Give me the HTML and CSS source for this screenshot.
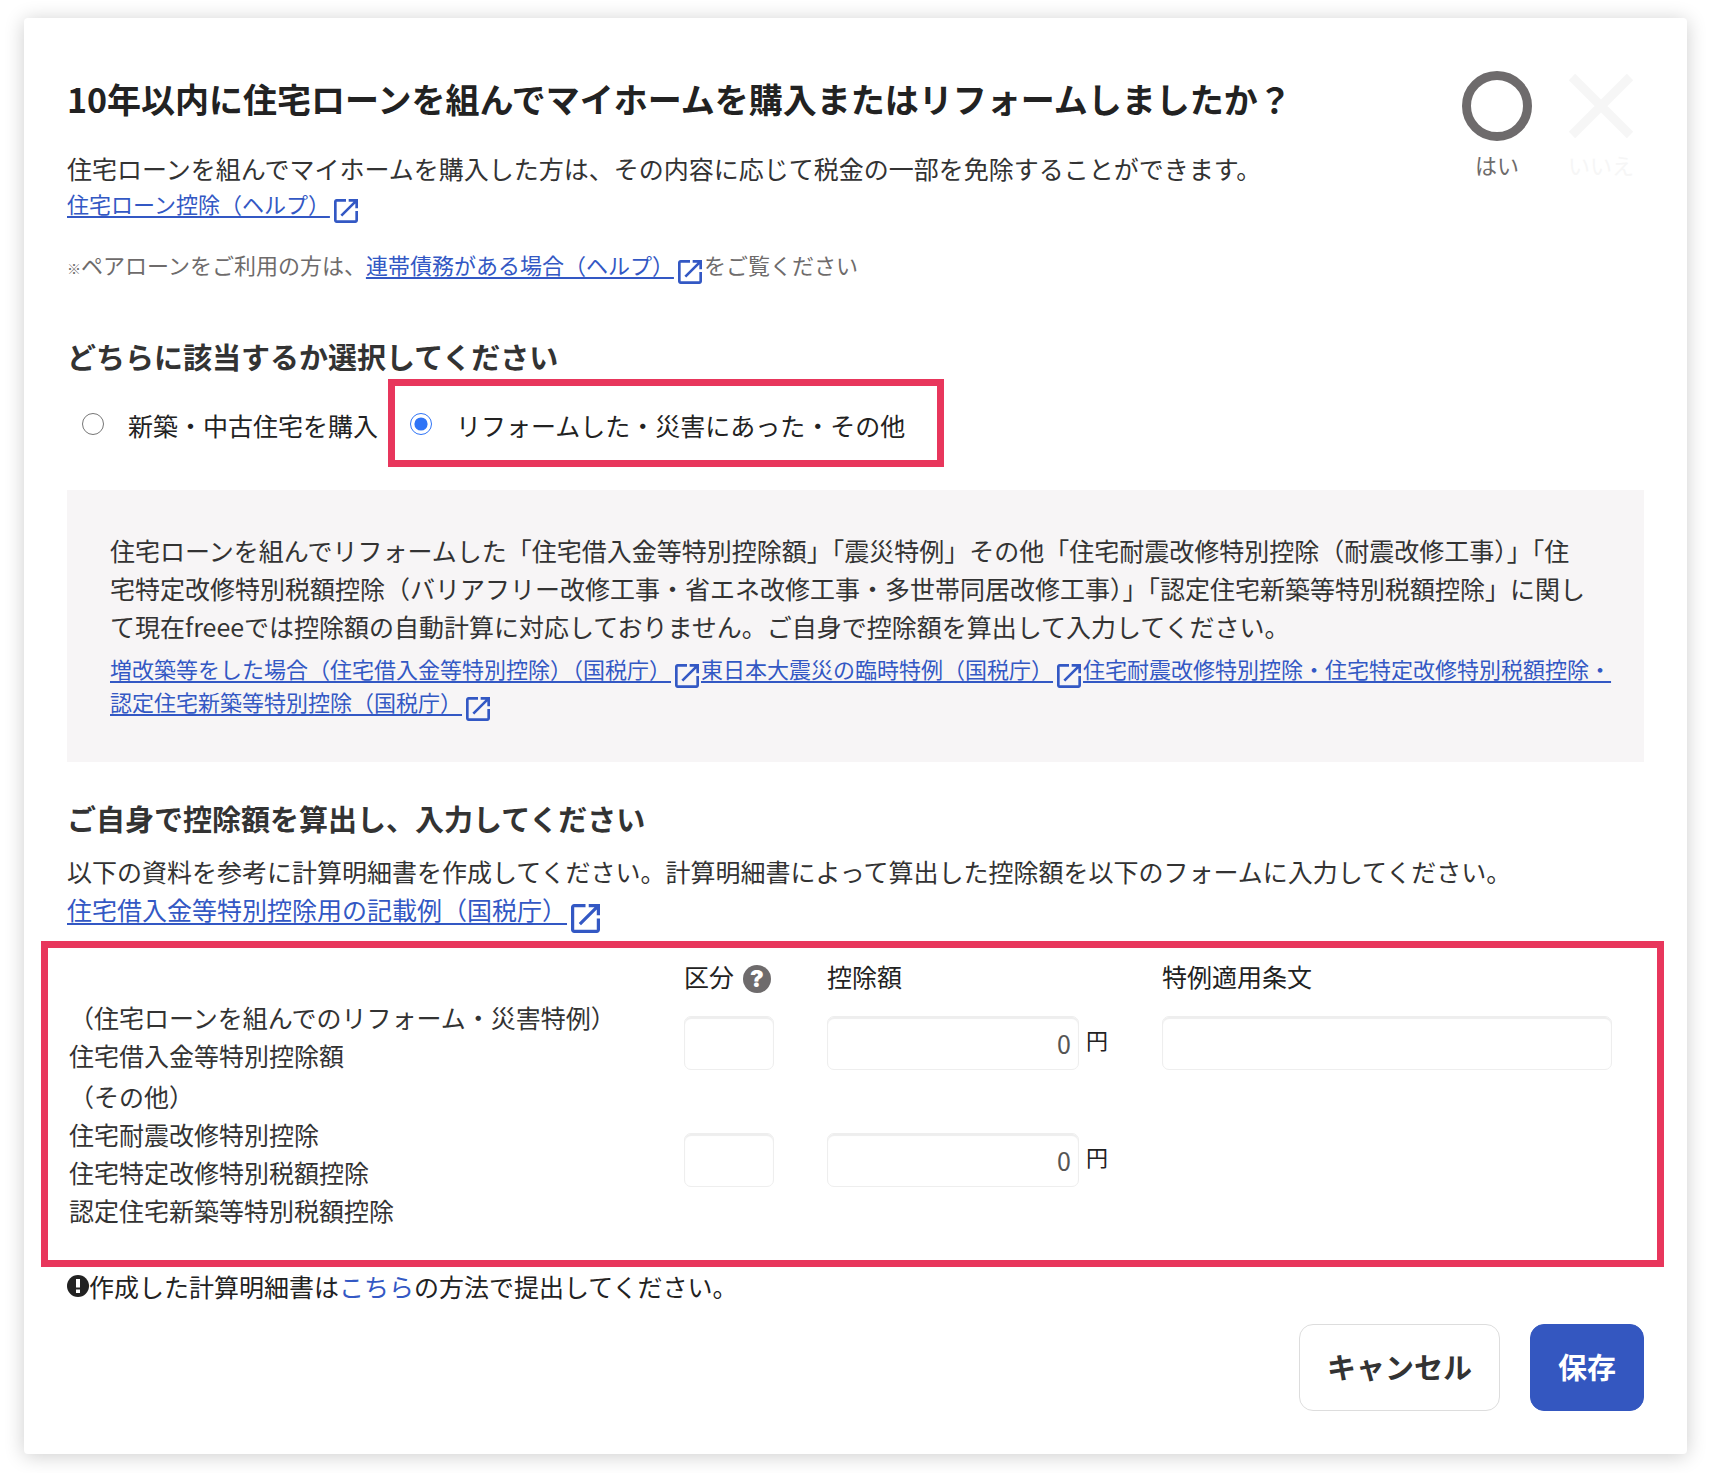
FILE: index.html
```html
<!DOCTYPE html>
<html lang="ja">
<head>
    <meta charset="UTF-8">
    <meta name="viewport" content="width=device-width, initial-scale=1.0">
    <title>住宅ローン控除</title>
    <link rel="stylesheet" href="styles.css">
</head>
<body>

    <!-- shared icon -->
    <svg class="sprite" aria-hidden="true">
        <symbol id="external" viewBox="3 3 18 18">
            <path d="M19 19H5V5h7V3H5c-1.1 0-2 .9-2 2v14c0 1.1.9 2 2 2h14c1.1 0 2-.9 2-2v-7h-2v7zM14 3v2h3.6l-9.8 9.8 1.4 1.4L19 6.4V10h2V3h-7z"/>
        </symbol>
    </svg>

    <form class="card">
        <div class="head">
            <div class="head-text">
                <h1 class="title">10年以内に住宅ローンを組んでマイホームを購入またはリフォームしましたか？</h1>
                <p class="text">住宅ローンを組んでマイホームを購入した方は、その内容に応じて税金の一部を免除することができます。</p>
                <p class="small"><a class="link" href="#">住宅ローン控除（ヘルプ）<svg class="ext"><use href="#external"/></svg></a></p>
                <p class="small note"><span class="mark">※</span>ペアローンをご利用の方は、<a class="link" href="#">連帯債務がある場合（ヘルプ）<svg class="ext"><use href="#external"/></svg></a>をご覧ください</p>
            </div>
            <div class="choices">
                <button type="button" class="choice">
                    <svg class="choice-icon" viewBox="0 0 70 70"><circle cx="35" cy="35" r="30.5"/></svg>
                    はい
                </button>
                <button type="button" class="choice off">
                    <svg class="choice-icon" viewBox="0 0 70 70"><path d="M6 6l58 58M64 6L6 64"/></svg>
                    いいえ
                </button>
            </div>
        </div>

        <h2 class="subtitle" id="kind-title">どちらに該当するか選択してください</h2>
        <div class="radios" role="radiogroup" aria-labelledby="kind-title">
            <label class="radio"><input type="radio" name="kind">新築・中古住宅を購入</label>
            <label class="radio marked"><input type="radio" name="kind" checked>リフォームした・災害にあった・その他</label>
        </div>

        <div class="info">
            <p class="text">住宅ローンを組んでリフォームした「住宅借入金等特別控除額」「震災特例」その他「住宅耐震改修特別控除（耐震改修工事）」「住<br>宅特定改修特別税額控除（バリアフリー改修工事・省エネ改修工事・多世帯同居改修工事）」「認定住宅新築等特別税額控除」に関し<br>て現在freeeでは控除額の自動計算に対応しておりません。ご自身で控除額を算出して入力してください。</p>
            <p class="small info-links"><a class="link" href="#">増改築等をした場合（住宅借入金等特別控除）（国税庁）<svg class="ext"><use href="#external"/></svg></a><a class="link" href="#">東日本大震災の臨時特例（国税庁）<svg class="ext"><use href="#external"/></svg></a><a class="link" href="#">住宅耐震改修特別控除・住宅特定改修特別税額控除・<br>認定住宅新築等特別控除（国税庁）<svg class="ext"><use href="#external"/></svg></a></p>
        </div>

        <h2 class="subtitle amounts-title">ご自身で控除額を算出し、入力してください</h2>
        <p class="text">以下の資料を参考に計算明細書を作成してください。計算明細書によって算出した控除額を以下のフォームに入力してください。</p>
        <p class="text"><a class="link" href="#">住宅借入金等特別控除用の記載例（国税庁）<svg class="ext big"><use href="#external"/></svg></a></p>

        <div class="amounts marked">
            <table class="table">
                <colgroup>
                    <col>
                    <col class="col-class">
                    <col class="col-amount">
                    <col class="col-clause">
                </colgroup>
                <thead>
                    <tr>
                        <td></td>
                        <th scope="col">
                            <div class="with-help">区分<button type="button" class="help" aria-label="区分のヘルプ">?</button></div>
                        </th>
                        <th scope="col">控除額</th>
                        <th scope="col">特例適用条文</th>
                    </tr>
                </thead>
                <tbody>
                    <tr>
                        <th scope="row"><span class="opening">（</span>住宅ローンを組んでのリフォーム・災害特例）<br>住宅借入金等特別控除額</th>
                        <td><input class="field class-field" type="text" aria-label="住宅借入金等特別控除額の区分"></td>
                        <td>
                            <label class="yen"><input class="field amount-field" type="text" value="0" aria-label="住宅借入金等特別控除額の控除額"><span class="unit">円</span></label>
                        </td>
                        <td><input class="field clause-field" type="text" aria-label="特例適用条文"></td>
                    </tr>
                    <tr>
                        <th scope="row"><span class="opening">（</span>その他）<br>住宅耐震改修特別控除<br>住宅特定改修特別税額控除<br>認定住宅新築等特別税額控除</th>
                        <td><input class="field class-field" type="text" aria-label="その他の区分"></td>
                        <td>
                            <label class="yen"><input class="field amount-field" type="text" value="0" aria-label="その他の控除額"><span class="unit">円</span></label>
                        </td>
                        <td></td>
                    </tr>
                </tbody>
            </table>
        </div>

        <p class="text submit-note">
            <svg class="alert" viewBox="0 0 22 22" aria-hidden="true"><circle cx="11" cy="11" r="11"/><path d="M9 4h4v8.500H9zM9 14.500h4v3.500H9z"/></svg>
            <span>作成した計算明細書は<a class="plain-link" href="#">こちら</a>の方法で提出してください。</span>
        </p>

        <div class="actions">
            <button type="button" class="button">キャンセル</button>
            <button type="submit" class="button primary">保存</button>
        </div>
    </form>

</body>
</html>
```

FILE: styles.css
```css
* {
    box-sizing: border-box;
}

body {
    margin: 0;
    padding: 18px 31px 19px 24px;
    background-color: #fff;
    color: #333;
    font-family: "Noto Sans CJK JP", sans-serif;
    font-size: 25px;
    line-height: 38px;
}

h1, h2, p {
    margin: 0;
}

button, input {
    font-family: inherit;
}

.sprite {
    display: none;
}

.card {
    padding: 43px;
    background-color: #fff;
    border-radius: 4px;
    box-shadow: 0 2px 20px rgba(0, 0, 0, 0.2);
}

.head {
    display: flex;
    justify-content: space-between;
}

.head-text {
    padding-top: 12px;
}

.title {
    margin-bottom: 25px;
    color: #222;
    font-size: 34px;
    line-height: 51px;
}

.small {
    font-size: 22px;
    line-height: 33px;
}

.note {
    margin-top: 28px;
    color: #6e6b6b;
}

.mark {
    font-size: 14px;
    line-height: 1;
}

.link {
    color: #3358c4;
    text-decoration: underline;
    text-decoration-thickness: 2px;
    text-decoration-skip-ink: none;
    text-underline-offset: 3px;
}

.plain-link {
    color: #3358c4;
    text-decoration: none;
}

.ext {
    width: 24px;
    height: 24px;
    margin: -8px 2px -8px 4px;
    fill: #3358c4;
    vertical-align: -2px;
}

.ext.big {
    width: 29px;
    height: 29px;
    vertical-align: -5px;
}

/* yes / no */
.choices {
    display: flex;
    align-items: flex-start;
    gap: 18px;
    padding-top: 10px;
}

.choice {
    display: flex;
    flex-direction: column;
    align-items: center;
    gap: 7px;
    width: 86px;
    padding: 0;
    background: none;
    border: none;
    color: #6e6b6b;
    font-size: 22px;
    line-height: 33px;
    white-space: nowrap;
    cursor: pointer;
}

.choice-icon {
    width: 70px;
    height: 70px;
    fill: none;
    stroke: #6e6b6c;
    stroke-width: 9;
}

.choice.off {
    color: #f6f6f6;
}

.choice.off .choice-icon {
    stroke: #f6f6f6;
}

.subtitle {
    margin-top: 53px;
    font-size: 29px;
    line-height: 44px;
}

/* radio buttons */
.radios {
    display: flex;
    align-items: baseline;
    gap: 10px;
    margin-top: 1px;
    color: #222;
}

.radio {
    display: flex;
    align-items: center;
    gap: 24px;
    padding-left: 15px;
}

.radio input {
    width: 22px;
    height: 22px;
    margin: 0 0 2px;
    accent-color: #2f74f6;
}

.marked {
    border: 7px solid #e8365c;
}

.radio.marked {
    padding: 20px 32px 16px 15px;
}

.info {
    margin-top: 23px;
    padding: 41px 20px 44px 43px;
    background-color: #f7f5f6;
}

.info-links {
    margin-top: 7px;
}

.amounts-title {
    margin-top: 34px;
    margin-bottom: 12px;
}

/* amounts table */
.amounts {
    margin: 13px -20px 0 -26px;
    padding: 9px 15px 28px 19px;
}

.table {
    width: 100%;
    table-layout: fixed;
    border-collapse: collapse;
}

.table th,
.table td {
    padding: 0 2px 3px;
    font-weight: normal;
    text-align: left;
}

.table thead {
    color: #222;
}

.col-class {
    width: 143px;
}

.col-amount {
    width: 335px;
}

.col-clause {
    width: 482px;
}

.table tbody td {
    padding-top: 14px;
}

.opening {
    text-spacing-trim: space-all;
}

.with-help {
    display: flex;
    align-items: center;
    gap: 9px;
}

.help {
    width: 28px;
    height: 28px;
    margin-top: 6px;
    padding: 0;
    background-color: #6e6b6c;
    border: none;
    border-radius: 50%;
    color: #fff;
    font-family: Inter, sans-serif;
    font-size: 23px;
    font-weight: 900;
    line-height: 28px;
    text-align: center;
    cursor: pointer;
}

.field {
    display: block;
    height: 54px;
    padding: 0 7px;
    background-color: #fff;
    border: 1px solid #eee;
    border-radius: 7px;
    box-shadow: inset 0 2px 1px #eee;
    color: #555;
    font-size: 25px;
}

.class-field {
    width: 90px;
}

.amount-field {
    width: 252px;
    text-align: right;
}

.clause-field {
    width: 450px;
}

.yen {
    display: flex;
    align-items: center;
    gap: 7px;
    color: #222;
    font-size: 22px;
}

.unit {
    padding-bottom: 8px;
}

.submit-note {
    display: flex;
    align-items: center;
    color: #222;
}

.alert {
    width: 22px;
    height: 22px;
    fill: #222;
}

.alert path {
    fill: #fff;
}

.actions {
    display: flex;
    justify-content: flex-end;
    gap: 30px;
    margin-top: 19px;
}

.button {
    height: 87px;
    padding: 0 27px 4px;
    background-color: #fff;
    border: 1px solid #ddd;
    border-radius: 14px;
    color: #333;
    font-size: 29px;
    font-weight: bold;
    cursor: pointer;
}

.button.primary {
    background-color: #3457c0;
    border-color: #3457c0;
    color: #fff;
}
```
